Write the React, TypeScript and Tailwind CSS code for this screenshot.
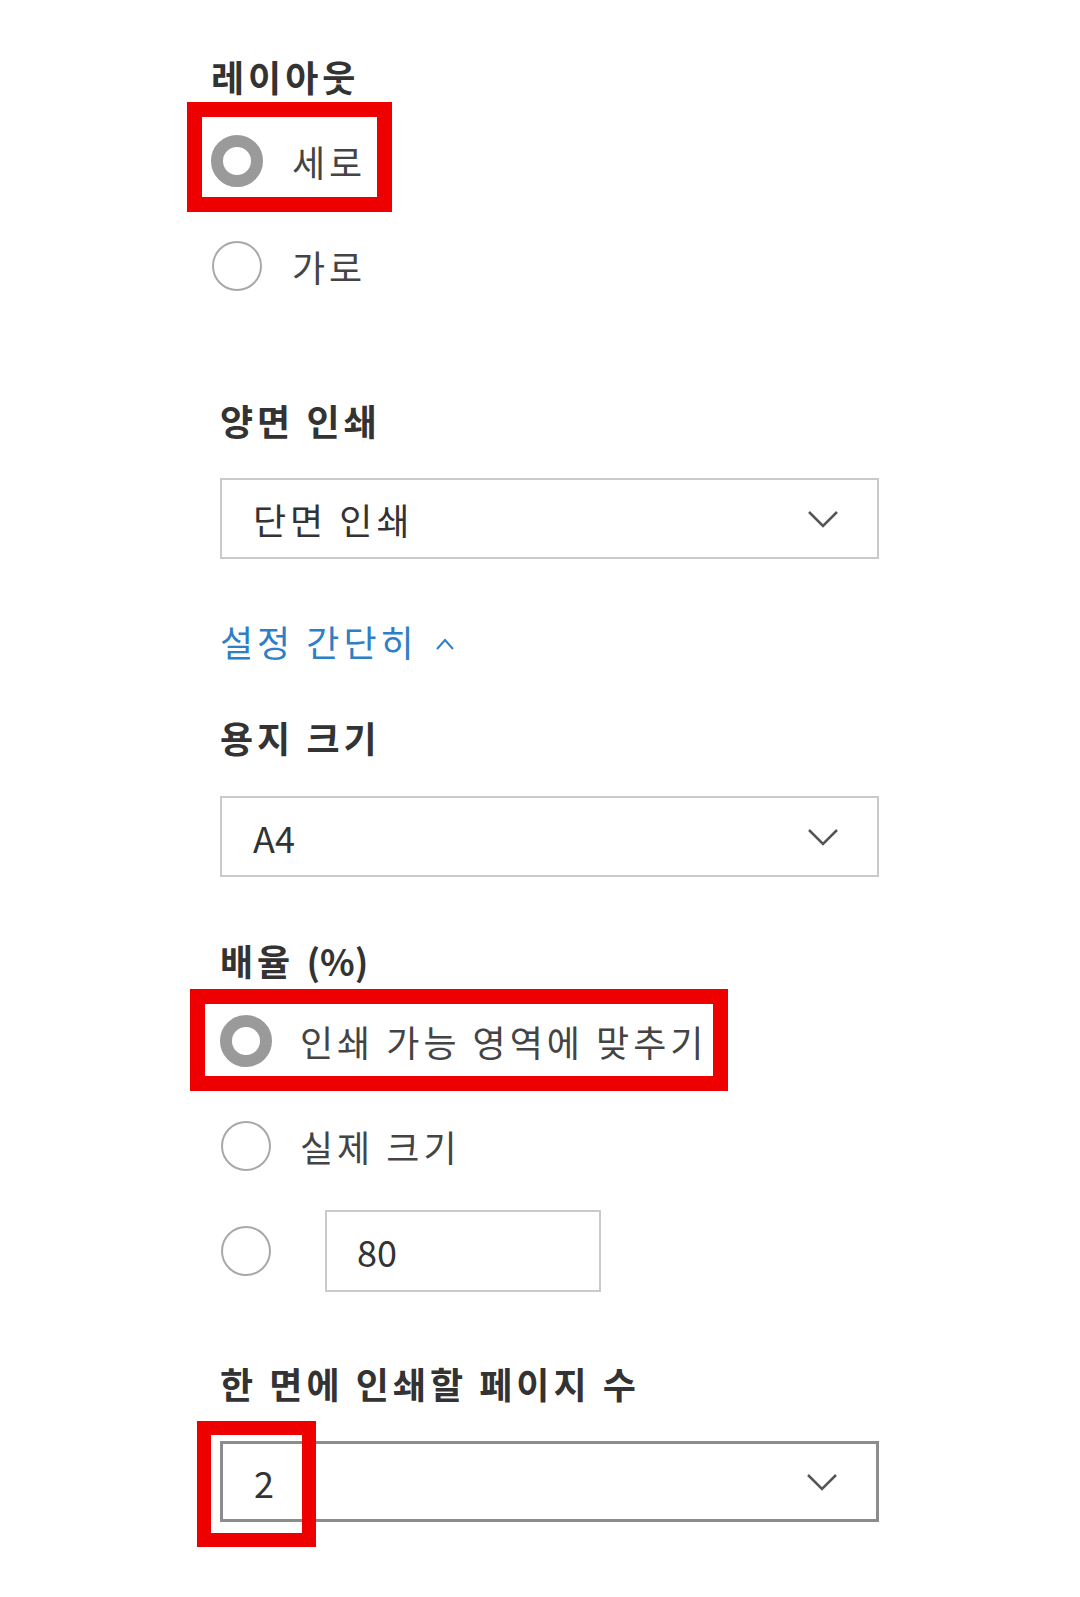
import { ReactNode } from "react";

const font = { fontFamily: '"Noto Sans CJK KR", "Noto Sans", sans-serif' };

function Label({ children, className = "" }: { children: ReactNode; className?: string }) {
  return (
    <div className={"h-[44px] flex items-center text-[36px] font-bold tracking-[4px] text-[#333] leading-none " + className}>
      {children}
    </div>
  );
}

function Radio({ checked, children }: { checked?: boolean; children?: ReactNode }) {
  return (
    <div className="h-[105px] flex items-center">
      <div className="w-[52px] h-[52px] flex items-center justify-center shrink-0">
        {checked ? (
          <div className="w-[52px] h-[52px] rounded-full border-[12px] border-[#9a9a9a] bg-white" />
        ) : (
          <div className="w-[50px] h-[50px] rounded-full border-2 border-[#a8a8a8] bg-white" />
        )}
      </div>
      {children}
    </div>
  );
}

function Chevron() {
  return (
    <svg width="32" height="18" viewBox="0 0 32 18" fill="none">
      <path d="M2 2 L16 16 L30 2" stroke="#555" strokeWidth="2.5" />
    </svg>
  );
}

function Select({ value, strong, latin }: { value: string; strong?: boolean; latin?: boolean }) {
  return (
    <div
      className={
        "w-[659px] h-[81px] flex items-center justify-between pl-[31px] pr-[38px] bg-white " +
        (strong ? "border-[3px] border-[#8c8c8c]" : "border-2 border-[#cacaca]")
      }
    >
      <span className={"text-[36px] text-[#333] leading-none " + (latin ? "tracking-normal" : "tracking-[4px]")}>
        {value}
      </span>
      <Chevron />
    </div>
  );
}

const optText = "text-[36px] tracking-[4px] text-[#444] leading-none";

export default function App() {
  return (
    <div className="relative w-[1080px] h-[1597px] bg-white overflow-hidden" style={font}>
      <div className="flex flex-col pl-[220px]">
        {/* 레이아웃 */}
        <div className="-ml-[9px] mt-[54px]">
          <Label>레이아웃</Label>
          <div className="mt-[10px]">
            <Radio checked>
              <span className={"ml-[29px] " + optText}>세로</span>
            </Radio>
            <Radio>
              <span className={"ml-[29px] " + optText}>가로</span>
            </Radio>
          </div>
        </div>

        <Label className="mt-[80px]">양면 인쇄</Label>
        <div className="mt-[36px]">
          <Select value="단면 인쇄" />
        </div>

        <div className="mt-[60px] h-[44px] flex items-center text-[36px] tracking-[4px] text-[#2e7fc6] leading-none">
          설정 간단히
          <svg className="ml-[17px] mt-[6px]" width="20" height="12" viewBox="0 0 20 12" fill="none">
            <path d="M2 11 L10 2 L18 11" stroke="#2e7fc6" strokeWidth="2" />
          </svg>
        </div>

        <Label className="mt-[52px]">용지 크기</Label>
        <div className="mt-[37px]">
          <Select value="A4" latin />
        </div>

        <Label className="mt-[61px]">
          <span>
            배율 <span className="tracking-normal">(%)</span>
          </span>
        </Label>
        <div className="mt-[6px]">
          <Radio checked>
            <span className={"ml-[28px] " + optText}>인쇄 가능 영역에 맞추기</span>
          </Radio>
          <Radio>
            <span className={"ml-[28px] " + optText}>실제 크기</span>
          </Radio>
          <Radio>
            <div className="ml-[53px] w-[276px] h-[82px] border-2 border-[#cacaca] flex items-center pl-[30px] text-[36px] text-[#333] leading-none">
              80
            </div>
          </Radio>
        </div>

        <Label className="mt-[58px]">한 면에 인쇄할 페이지 수</Label>
        <div className="mt-[36px]">
          <Select value="2" strong latin />
        </div>
      </div>

      {/* annotation boxes */}
      <div className="absolute left-[187px] top-[102px] w-[205px] h-[110px] border-[15px] border-[#ee0000]" />
      <div className="absolute left-[190px] top-[989px] w-[538px] h-[102px] border-[15px] border-[#ee0000]" />
      <div className="absolute left-[197px] top-[1421px] w-[119px] h-[126px] border-[14px] border-[#ee0000]" />
    </div>
  );
}
